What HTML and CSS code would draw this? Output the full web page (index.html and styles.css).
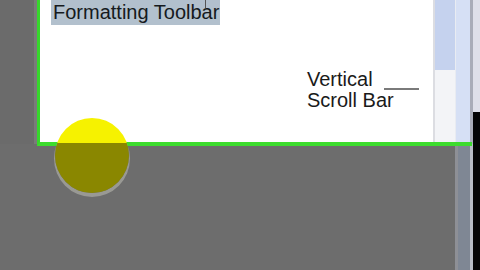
FILE: index.html
```html
<!DOCTYPE html>
<html>
<head>
<meta charset="utf-8">
<link rel="stylesheet" href="styles.css">
</head>
<body>
<div class="screen">
  <div class="main">
    <div class="top">
      <div class="edge"></div>
      <div class="edge2"></div>
      <div class="doc">
        <div class="sel">Formatting Toolbar</div>
        <div class="label">Vertical<span class="pointer"></span><br>Scroll Bar</div>
      </div>
      <div class="vscroll">
        <div class="thumb"></div>
        <div class="track"></div>
      </div>
    </div>
    <div class="bottom"></div>
  </div>
  <div class="rail">
    <div class="rail-top"></div>
    <div class="rail-bottom"></div>
  </div>
  <div class="outer">
    <div class="outer-top"></div>
    <div class="outer-bottom"></div>
  </div>
  <div class="frame"></div>
  <div class="spot"></div>
</div>
</body>
</html>
```

FILE: styles.css
```css
html, body {
  margin: 0;
  padding: 0;
  width: 480px;
  height: 270px;
  overflow: hidden;
  background: #6d6d6d;
}
.screen {
  position: relative;
  display: flex;
  width: 480px;
  height: 270px;
  font-family: "Liberation Sans", Arial, sans-serif;
}
.main {
  display: flex;
  flex-direction: column;
  width: 455px;
}
.top {
  display: flex;
  height: 144px;
}
.edge {
  width: 34px;
  background: #6b6b6b;
}
.edge2 {
  width: 3px;
  background: #7a7a7a;
}
.doc {
  flex: 1;
  background: #ffffff;
  padding-left: 14px;
}
.sel {
  position: relative;
  display: inline-block;
  background: #b2c0cd;
  color: #151a20;
  font-size: 20px;
  line-height: 25px;
  padding: 0 1px 0 2px;
}
.sel::after {
  content: "";
  position: absolute;
  left: 154px;
  top: 0;
  width: 1px;
  height: 8px;
  background: #555;
}
.label {
  margin-top: 44px;
  margin-left: 256px;
  font-size: 20px;
  line-height: 21px;
  color: #1a1a1a;
}
.pointer {
  display: inline-block;
  width: 35px;
  height: 2px;
  margin-left: 11px;
  vertical-align: -4px;
  background: #7a7a7a;
}
.vscroll {
  display: flex;
  flex-direction: column;
  width: 22px;
  border-left: 2px solid #dcdde2;
  box-sizing: border-box;
}
.thumb {
  height: 70px;
  background: #c5d2ee;
}
.track {
  flex: 1;
  background: #f3f4f7;
}
.bottom {
  flex: 1;
  background: #6d6d6d;
}
.rail {
  display: flex;
  flex-direction: column;
  width: 18px;
}
.rail-top {
  height: 144px;
  background: #d6e0f5;
  border-left: 1px solid #e9ecf2;
  border-right: 3px solid #a9acb8;
}
.rail-bottom {
  flex: 1;
  background: linear-gradient(90deg, #8e9096 0, #8e9096 3px, #7f8794 3px, #7f8794 15px, #b8bcc4 15px);
}
.outer {
  display: flex;
  flex-direction: column;
  width: 7px;
}
.outer-top {
  height: 112px;
  background: #dedfe9;
}
.outer-bottom {
  flex: 1;
  background: #050505;
}
.frame {
  position: absolute;
  left: 37px;
  top: -10px;
  width: 432px;
  height: 152px;
  border-left: 3px solid #36d62c;
  border-bottom: 4px solid #3ddc2e;
}
.spot {
  position: absolute;
  left: 55px;
  top: 118px;
  width: 74px;
  height: 75px;
  border-radius: 50%;
  background: linear-gradient(180deg, #f6f200 0, #f6f200 25px, #8a8700 25px, #8a8700 100%);
  box-shadow: 0 3px 0 1px rgba(190, 190, 180, 0.55);
}
```
